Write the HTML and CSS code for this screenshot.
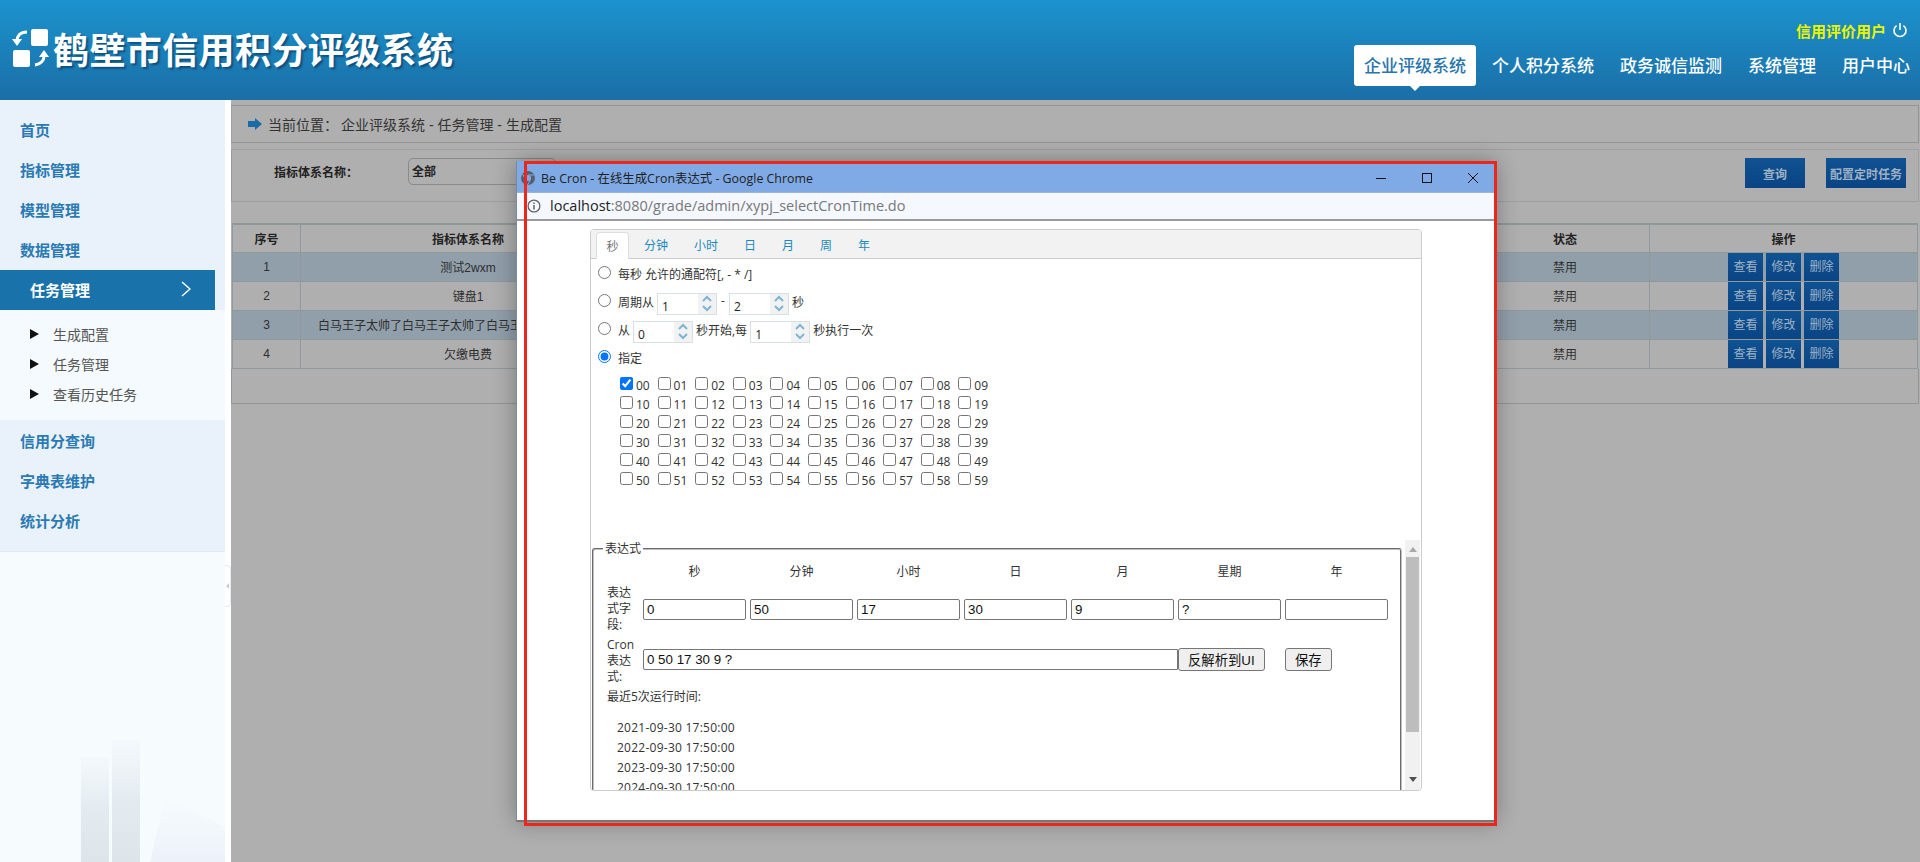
FILE: index.html
```html
<!DOCTYPE html>
<html lang="zh-CN">
<head>
    <meta charset="UTF-8">
    <title>鹤壁市信用积分评级系统</title>
    <link rel="stylesheet" href="styles.css">
</head>
<body>
<header class="top">
    <div class="brand">
        <svg class="logo" width="37" height="38" viewBox="0 0 37 38">
            <rect x="19" y="0" width="17" height="17" rx="2" fill="#fff"/>
            <rect x="1" y="21" width="17" height="17" rx="2" fill="#fff"/>
            <path d="M15 3 C8 3 5 7 5 12" fill="none" stroke="#fff" stroke-width="3"/>
            <path d="M0 10 L5 17 L10 10 Z" fill="#fff"/>
            <path d="M23 36 C29 35 32 31 32 27" fill="none" stroke="#fff" stroke-width="3"/>
            <path d="M27 28 L32 21 L37 28 Z" fill="#fff"/>
        </svg>
        <h1>鹤壁市信用积分评级系统</h1>
    </div>
    <div class="top-right">
        <div class="user">
            <span>信用评价用户</span>
            <svg width="16" height="16" viewBox="0 0 16 16">
                <path d="M4.6 3.6 A6 6 0 1 0 11.4 3.6" fill="none" stroke="#fff" stroke-width="1.6"/>
                <path d="M8 1 V8" stroke="#fff" stroke-width="1.6"/>
            </svg>
        </div>
        <nav class="nav">
            <a class="nav-item active">企业评级系统</a>
            <a class="nav-item">个人积分系统</a>
            <a class="nav-item">政务诚信监测</a>
            <a class="nav-item">系统管理</a>
            <a class="nav-item">用户中心</a>
        </nav>
    </div>
</header>

<div class="main">
    <aside class="side">
        <div class="menu-group first">
            <a class="menu-item">首页</a>
            <a class="menu-item">指标管理</a>
            <a class="menu-item">模型管理</a>
            <a class="menu-item">数据管理</a>
        </div>
        <a class="menu-active">
            <span>任务管理</span>
            <svg width="10" height="16" viewBox="0 0 10 16"><path d="M1 1 L9 8 L1 15" fill="none" stroke="#fff" stroke-width="1.5"/></svg>
        </a>
        <ul class="submenu">
            <li><i class="tri"></i>生成配置</li>
            <li><i class="tri"></i>任务管理</li>
            <li><i class="tri"></i>查看历史任务</li>
        </ul>
        <div class="menu-group second">
            <a class="menu-item">信用分查询</a>
            <a class="menu-item">字典表维护</a>
            <a class="menu-item">统计分析</a>
        </div>
        <svg class="skyline" width="225" height="125" viewBox="0 0 225 125">
            <defs>
                <linearGradient id="tower" x1="0" y1="0" x2="0" y2="1">
                    <stop offset="0" stop-color="#e6edf2" stop-opacity="0.2"/>
                    <stop offset="0.5" stop-color="#e4ebf0"/>
                    <stop offset="1" stop-color="#dde5ea"/>
                </linearGradient>
                <linearGradient id="haze" x1="0" y1="0" x2="0" y2="1">
                    <stop offset="0" stop-color="#eef3fa" stop-opacity="0"/>
                    <stop offset="1" stop-color="#edf2fa"/>
                </linearGradient>
            </defs>
            <path d="M165 60 L225 90 V125 H150 Z" fill="url(#haze)"/>
            <rect x="81" y="20" width="28" height="105" fill="url(#tower)"/>
            <rect x="112" y="3" width="28" height="122" fill="url(#tower)"/>
        </svg>
        <div class="side-handle"><i></i></div>
    </aside>

    <section class="content">
        <div class="crumb">
            <svg width="14" height="12" viewBox="0 0 14 12"><path d="M0 3 H7 V0 L14 6 L7 12 V9 H0 Z" fill="#1a6ca6"/></svg>
            <span class="crumb-label">当前位置：</span>
            <span>企业评级系统 - 任务管理 - 生成配置</span>
        </div>
        <div class="search">
            <label class="search-label">指标体系名称：</label>
            <select class="search-select"><option>全部</option></select>
            <button class="btn-query first-btn">查询</button>
            <button class="btn-query wide">配置定时任务</button>
        </div>
        <table class="grid">
            <colgroup>
                <col class="c-no"><col class="c-name"><col class="c-other"><col class="c-state"><col>
            </colgroup>
            <thead>
                <tr><th>序号</th><th>指标体系名称</th><th></th><th>状态</th><th>操作</th></tr>
            </thead>
            <tbody>
                <tr class="odd"><td>1</td><td>测试2wxm</td><td></td><td>禁用</td>
                    <td class="ops"><a>查看</a><a>修改</a><a>删除</a></td></tr>
                <tr><td>2</td><td>键盘1</td><td></td><td>禁用</td>
                    <td class="ops"><a>查看</a><a>修改</a><a>删除</a></td></tr>
                <tr class="odd"><td>3</td><td>白马王子太帅了白马王子太帅了白马王子太帅了白马王子</td><td></td><td>禁用</td>
                    <td class="ops"><a>查看</a><a>修改</a><a>删除</a></td></tr>
                <tr><td>4</td><td>欠缴电费</td><td></td><td>禁用</td>
                    <td class="ops"><a>查看</a><a>修改</a><a>删除</a></td></tr>
            </tbody>
        </table>
        <div class="grid-foot"></div>
    </section>
</div>

<!-- 弹出的 Chrome 窗口 -->
<div class="win">
    <div class="win-title">
        <svg width="14" height="14" viewBox="0 0 14 14">
            <circle cx="7" cy="7" r="7" fill="#55606e"/>
            <circle cx="7" cy="7" r="3" fill="#7faae6"/>
            <path d="M7 4 H13 M4.5 8.5 L1.5 3 M9.5 8.5 L6.5 14" stroke="#7faae6" stroke-width="1"/>
        </svg>
        <span class="win-name">Be Cron - 在线生成Cron表达式 - Google Chrome</span>
        <div class="win-btns">
            <span><svg width="12" height="12" viewBox="0 0 12 12"><path d="M1 6.5 H11" stroke="#111" stroke-width="1"/></svg></span>
            <span><svg width="12" height="12" viewBox="0 0 12 12"><rect x="1.5" y="1.5" width="9" height="9" fill="none" stroke="#111"/></svg></span>
            <span><svg width="12" height="12" viewBox="0 0 12 12"><path d="M1 1 L11 11 M11 1 L1 11" stroke="#111" stroke-width="1"/></svg></span>
        </div>
    </div>
    <div class="win-addr">
        <svg width="14" height="14" viewBox="0 0 14 14">
            <circle cx="7" cy="7" r="5.9" fill="none" stroke="#5f6368" stroke-width="1.3"/>
            <path d="M7 6 V10.5 M7 3.5 V5" stroke="#5f6368" stroke-width="1.5"/>
        </svg>
        <span class="addr-text"><b>localhost</b>:8080/grade/admin/xypj_selectCronTime.do</span>
    </div>
    <div class="win-body">
        <div class="panel">
            <div class="tabs">
                <a class="tab active">秒</a>
                <a class="tab">分钟</a>
                <a class="tab">小时</a>
                <a class="tab">日</a>
                <a class="tab">月</a>
                <a class="tab">周</a>
                <a class="tab">年</a>
            </div>
            <div class="pane">
                <div class="row"><input type="radio" name="sec"><span class="txt">每秒 允许的通配符[, - * /]</span></div>
                <div class="row">
                    <input type="radio" name="sec"><span class="txt">周期从</span>
                    <div class="spin"><input value="1"><div class="spin-arrows"><svg width="12" height="17" viewBox="0 0 12 17"><path d="M2 6 L6 2 L10 6 M2 11 L6 15 L10 11" fill="none" stroke="#7db5d4" stroke-width="2"/></svg></div></div>
                    <span class="txt dash">-</span>
                    <div class="spin"><input value="2"><div class="spin-arrows"><svg width="12" height="17" viewBox="0 0 12 17"><path d="M2 6 L6 2 L10 6 M2 11 L6 15 L10 11" fill="none" stroke="#7db5d4" stroke-width="2"/></svg></div></div>
                    <span class="txt">秒</span>
                </div>
                <div class="row">
                    <input type="radio" name="sec"><span class="txt">从</span>
                    <div class="spin"><input value="0"><div class="spin-arrows"><svg width="12" height="17" viewBox="0 0 12 17"><path d="M2 6 L6 2 L10 6 M2 11 L6 15 L10 11" fill="none" stroke="#7db5d4" stroke-width="2"/></svg></div></div>
                    <span class="txt">秒开始,每</span>
                    <div class="spin"><input value="1"><div class="spin-arrows"><svg width="12" height="17" viewBox="0 0 12 17"><path d="M2 6 L6 2 L10 6 M2 11 L6 15 L10 11" fill="none" stroke="#7db5d4" stroke-width="2"/></svg></div></div>
                    <span class="txt">秒执行一次</span>
                </div>
                <div class="row"><input type="radio" name="sec" checked><span class="txt">指定</span></div>
                <div class="checks">
                    <label><input type="checkbox" checked><span>00</span></label><label><input type="checkbox"><span>01</span></label><label><input type="checkbox"><span>02</span></label><label><input type="checkbox"><span>03</span></label><label><input type="checkbox"><span>04</span></label><label><input type="checkbox"><span>05</span></label><label><input type="checkbox"><span>06</span></label><label><input type="checkbox"><span>07</span></label><label><input type="checkbox"><span>08</span></label><label><input type="checkbox"><span>09</span></label>
                    <label><input type="checkbox"><span>10</span></label><label><input type="checkbox"><span>11</span></label><label><input type="checkbox"><span>12</span></label><label><input type="checkbox"><span>13</span></label><label><input type="checkbox"><span>14</span></label><label><input type="checkbox"><span>15</span></label><label><input type="checkbox"><span>16</span></label><label><input type="checkbox"><span>17</span></label><label><input type="checkbox"><span>18</span></label><label><input type="checkbox"><span>19</span></label>
                    <label><input type="checkbox"><span>20</span></label><label><input type="checkbox"><span>21</span></label><label><input type="checkbox"><span>22</span></label><label><input type="checkbox"><span>23</span></label><label><input type="checkbox"><span>24</span></label><label><input type="checkbox"><span>25</span></label><label><input type="checkbox"><span>26</span></label><label><input type="checkbox"><span>27</span></label><label><input type="checkbox"><span>28</span></label><label><input type="checkbox"><span>29</span></label>
                    <label><input type="checkbox"><span>30</span></label><label><input type="checkbox"><span>31</span></label><label><input type="checkbox"><span>32</span></label><label><input type="checkbox"><span>33</span></label><label><input type="checkbox"><span>34</span></label><label><input type="checkbox"><span>35</span></label><label><input type="checkbox"><span>36</span></label><label><input type="checkbox"><span>37</span></label><label><input type="checkbox"><span>38</span></label><label><input type="checkbox"><span>39</span></label>
                    <label><input type="checkbox"><span>40</span></label><label><input type="checkbox"><span>41</span></label><label><input type="checkbox"><span>42</span></label><label><input type="checkbox"><span>43</span></label><label><input type="checkbox"><span>44</span></label><label><input type="checkbox"><span>45</span></label><label><input type="checkbox"><span>46</span></label><label><input type="checkbox"><span>47</span></label><label><input type="checkbox"><span>48</span></label><label><input type="checkbox"><span>49</span></label>
                    <label><input type="checkbox"><span>50</span></label><label><input type="checkbox"><span>51</span></label><label><input type="checkbox"><span>52</span></label><label><input type="checkbox"><span>53</span></label><label><input type="checkbox"><span>54</span></label><label><input type="checkbox"><span>55</span></label><label><input type="checkbox"><span>56</span></label><label><input type="checkbox"><span>57</span></label><label><input type="checkbox"><span>58</span></label><label><input type="checkbox"><span>59</span></label>
                </div>
            </div>
            <div class="expr">
                <div class="expr-view">
                    <fieldset class="expr-box">
                        <legend>表达式</legend>
                        <div class="expr-grid">
                            <span></span>
                            <span class="col-head">秒</span><span class="col-head">分钟</span><span class="col-head">小时</span><span class="col-head">日</span><span class="col-head">月</span><span class="col-head">星期</span><span class="col-head">年</span>
                            <span class="row-label">表达式字段:</span>
                            <input class="field" value="0"><input class="field" value="50"><input class="field" value="17"><input class="field" value="30"><input class="field" value="9"><input class="field" value="?"><input class="field" value="">
                            <span class="row-label end">Cron 表达式:</span>
                            <input class="field cron" value="0 50 17 30 9 ?">
                            <div><button class="plain">反解析到UI</button></div>
                            <div><button class="plain">保存</button></div>
                        </div>
                        <div class="recent">最近5次运行时间:</div>
                        <ul class="times">
                            <li>2021-09-30 17:50:00</li>
                            <li>2022-09-30 17:50:00</li>
                            <li>2023-09-30 17:50:00</li>
                            <li>2024-09-30 17:50:00</li>
                            <li>2025-09-30 17:50:00</li>
                        </ul>
                    </fieldset>
                </div>
                <div class="scrollbar">
                    <svg width="8" height="5" viewBox="0 0 8 5"><path d="M0 5 L4 0 L8 5 Z" fill="#a8a8a8"/></svg>
                    <div class="thumb"></div>
                    <svg class="down" width="8" height="5" viewBox="0 0 8 5"><path d="M0 0 L4 5 L8 0 Z" fill="#505050"/></svg>
                </div>
            </div>
        </div>
    </div>
</div>
<div class="mark"></div>
</body>
</html>
```
FILE: styles.css
```css
* {
    box-sizing: border-box;
}

html, body {
    height: 100%;
}

body {
    margin: 0;
    overflow: hidden;
    font-family: "Liberation Sans", "Noto Sans CJK SC", sans-serif;
    font-size: 12px;
    color: #2e2e2e;
    background: #afafaf;
}

ul {
    margin: 0;
    padding: 0;
    list-style: none;
}

/* 顶部 */
.top {
    height: 100px;
    display: flex;
    justify-content: space-between;
    background: linear-gradient(#1b93ce, #1b6ea6);
}

.brand {
    display: flex;
    align-items: center;
    padding: 0 0 4px 12px;
    gap: 4px;
}

.logo {
    flex: none;
}

.brand h1 {
    margin: 0;
    font-family: "Noto Sans CJK SC", sans-serif;
    font-size: 36px;
    font-weight: 700;
    letter-spacing: 0.4px;
    color: #fff;
    text-shadow: 2px 2px 2px rgba(0, 40, 80, 0.55);
}

.top-right {
    display: flex;
    flex-direction: column;
    align-items: flex-end;
    padding-top: 19px;
}

.user {
    display: flex;
    align-items: center;
    gap: 6px;
    height: 22px;
    padding-right: 12px;
    font-family: "Noto Sans CJK SC", sans-serif;
    font-size: 15px;
    font-weight: 700;
    color: #e9f500;
}

.nav {
    display: flex;
    gap: 6px;
    margin-top: 4px;
}

.nav-item {
    position: relative;
    height: 41px;
    padding: 0 10px;
    font-family: "Noto Sans CJK SC", sans-serif;
    font-size: 17px;
    font-weight: 500;
    line-height: 40px;
    color: #fff;
}

.nav-item.active {
    background: #fff;
    border-radius: 3px;
    color: #2a76ab;
}

.nav-item.active::after {
    content: "";
    position: absolute;
    left: 50%;
    bottom: -5px;
    margin-left: -5px;
    border-left: 5px solid transparent;
    border-right: 5px solid transparent;
    border-top: 5px solid #fff;
}

/* 主体 */
.main {
    display: flex;
    height: 762px;
}

.side {
    position: relative;
    flex: none;
    width: 231px;
    border-right: 6px solid #fff;
    background: #f6fbfe;
    font-family: "Noto Sans CJK SC", sans-serif;
}

.menu-group {
    background: #e9f1fb;
    border-bottom: 1px solid #e2ebf5;
}

.menu-group.first {
    height: 170px;
    padding-top: 10px;
    border-bottom: 0;
}

.menu-group.second {
    height: 132px;
    padding-top: 1px;
}

.menu-item {
    display: block;
    height: 40px;
    padding-left: 20px;
    font-size: 15px;
    font-weight: 700;
    line-height: 40px;
    color: #2b7ab3;
}

.menu-active {
    display: flex;
    align-items: center;
    justify-content: space-between;
    position: relative;
    width: 215px;
    height: 40px;
    padding: 0 24px 2px 30px;
    background: #1a72ab;
    font-size: 15px;
    font-weight: 700;
    color: #fff;
}

.menu-group.first + .menu-active {
    box-shadow: 10px 0 0 #e9f1fb;
}

.submenu {
    height: 110px;
    padding-top: 9px;
    background: #f5fafe;
}

.submenu li {
    display: flex;
    align-items: center;
    height: 30px;
    padding-left: 30px;
    font-size: 14px;
    color: #555;
}

.tri {
    width: 0;
    height: 0;
    margin-right: 14px;
    border-left: 9px solid #111;
    border-top: 5px solid transparent;
    border-bottom: 5px solid transparent;
}

.skyline {
    position: absolute;
    left: 0;
    bottom: 0;
}

.side-handle {
    position: absolute;
    left: 225px;
    top: 465px;
    display: flex;
    align-items: center;
    justify-content: center;
    width: 6px;
    height: 42px;
    background: #fff;
    border: 1px solid #e6ebef;
    border-left: 0;
    border-radius: 0 4px 4px 0;
}

.side-handle i {
    border-right: 3px solid #c5ccd3;
    border-top: 3px solid transparent;
    border-bottom: 3px solid transparent;
}

/* 右侧内容 */
.content {
    flex: 1;
    min-width: 0;
    padding: 5px 1px 0 0;
}

.crumb {
    display: flex;
    align-items: center;
    height: 38px;
    padding: 0 0 0 16px;
    border: 1px solid #959595;
    border-left-color: #a0a0a0;
    font-size: 14px;
    color: #333;
}

.crumb svg {
    margin-right: 6px;
}

.crumb-label {
    width: 74px;
}

.crumb span:last-child {
    margin-left: -1px;
}

.search {
    display: flex;
    align-items: flex-start;
    height: 53px;
    margin-top: 6px;
    padding: 8px 12px 0 42px;
    border: 1px solid #a0a0a0;
    border-left-color: #999;
}

.search-label {
    width: 134px;
    padding-top: 5px;
    font-weight: 700;
    color: #222;
}

.search-select {
    width: 148px;
    height: 27px;
    padding: 0 3px;
    font: 700 12px "Liberation Sans", "Noto Sans CJK SC", sans-serif;
    color: #222;
    background: #afafaf;
    border: 1px solid #8a8a8a;
    border-radius: 5px;
    appearance: none;
}

.btn-query {
    width: 60px;
    height: 30px;
    padding: 0;
    border: 0;
    font: 700 12px "Liberation Sans", "Noto Sans CJK SC", sans-serif;
    color: #9fb1c4;
    background: linear-gradient(#0f5292, #0a4484);
}

.first-btn {
    margin-left: auto;
}

.btn-query.wide {
    width: 80px;
    margin-left: 21px;
}

.grid {
    width: 1686px;
    margin: 21px 0 0 1px;
    table-layout: fixed;
    border-collapse: collapse;
    border-top: 2px solid #8b9a98;
}

.c-no {
    width: 68px;
}

.c-name {
    width: 335px;
}

.c-other {
    width: 845px;
}

.c-state {
    width: 169px;
}

.grid th,
.grid td {
    height: 29px;
    padding: 0;
    border: 1px solid #8f9a9c;
    text-align: center;
    white-space: nowrap;
    overflow: hidden;
    color: #2e2e2e;
}

.grid th {
    height: 28px;
    font-weight: 700;
    color: #222;
}

.grid .odd td {
    background: #919fab;
}

.ops {
    font-size: 0;
}

.ops a {
    display: inline-block;
    width: 35px;
    height: 28px;
    margin: 0 1.5px;
    font-size: 12px;
    line-height: 28px;
    color: #9fb1c4;
    background: linear-gradient(#0f5292, #0a4484);
    vertical-align: top;
}

.grid-foot {
    height: 35px;
    border: 1px solid #959595;
    border-top: 0;
}

/* Chrome 窗口 */
.win {
    position: absolute;
    left: 516px;
    top: 161px;
    width: 980px;
    height: 661px;
    display: flex;
    flex-direction: column;
    background: #fff;
    border-left: 1px solid #7c8aa0;
    border-bottom: 2px solid #777;
    box-shadow: 0 0 22px rgba(0, 0, 0, 0.32);
}

.win-title {
    flex: none;
    display: flex;
    align-items: center;
    height: 31px;
    padding: 2px 0 0 4px;
    background: #7faae6;
    font-family: "Open Sans", "Noto Sans CJK SC", sans-serif;
    font-size: 12.4px;
    color: #222;
}

.win-name {
    margin-left: 6px;
}

.win-btns {
    display: flex;
    margin-left: auto;
}

.win-btns span {
    display: flex;
    justify-content: center;
    width: 46px;
}

.win-addr {
    flex: none;
    display: flex;
    align-items: center;
    height: 29px;
    padding: 0 0 1px 10px;
    background: #f5f9ff;
    border-top: 1px solid #9fb4d4;
    border-bottom: 2px solid #999;
}

.addr-text {
    margin-left: 9px;
    font-family: "Open Sans", sans-serif;
    font-size: 14.5px;
    color: #777;
}

.addr-text b {
    font-weight: 400;
    color: #222;
}

.win-body {
    flex: 1;
    min-height: 0;
    padding: 8px 0 0 73px;
}

.panel {
    width: 832px;
    height: 562px;
    border: 1px solid #ccc;
    border-radius: 4px;
    font-family: "Open Sans", "Noto Sans CJK SC", sans-serif;
    color: #333;
    overflow: hidden;
}

.tabs {
    display: flex;
    height: 29px;
    padding: 2px 0 0 5px;
    background: #f2f2f2;
    border-bottom: 1px solid #ccc;
}

.tab {
    height: 26px;
    padding: 0 13px;
    line-height: 27px;
    color: #1b8ac0;
}

.tab.active {
    width: 33px;
    height: 27px;
    margin-right: 2px;
    padding: 0;
    text-align: center;
    color: #777;
    background: #fff;
    border: 1px solid #ddd;
    border-bottom: 0;
    border-radius: 4px 4px 0 0;
}

.pane {
    height: 282px;
    margin-top: -1px;
    padding-left: 7px;
}

.row {
    display: flex;
    align-items: center;
    height: 28px;
}

.row input[type="radio"] {
    width: 13px;
    height: 13px;
    margin: 0 7px 0 0;
}

.txt {
    margin-top: 4px;
    white-space: nowrap;
}

.dash {
    width: 6px;
    margin-top: 0;
    text-align: center;
}

.spin {
    display: flex;
    flex: none;
    width: 60px;
    height: 22px;
    margin: 7px 3px 0;
    border: 1px solid #d9e0e4;
}

.spin input {
    width: 40px;
    height: 100%;
    padding: 5px 0 0 4px;
    border: 0;
    outline: 0;
    font: 12px "Open Sans", sans-serif;
    color: #222;
    background: #fff;
}

.spin-arrows {
    display: flex;
    align-items: center;
    justify-content: center;
    flex: 1;
    background: #f2f2f2;
}

.checks {
    display: grid;
    grid-template-columns: repeat(10, 37.6px);
    grid-auto-rows: 19px;
    margin: 4px 0 0 22px;
}

.checks label {
    display: flex;
    align-items: center;
}

.checks input {
    flex: none;
    width: 13px;
    height: 13px;
    margin: 0 3px 0 0;
}

.checks span {
    margin-top: 3px;
}

.expr {
    display: flex;
    height: 250px;
}

.expr-view {
    width: 814px;
    overflow: hidden;
}

.expr-box {
    width: 810px;
    margin: 0 0 0 1px;
    padding: 0 0 0 13px;
    border: 2px groove #c0c0c0;
    border-radius: 3px;
    min-inline-size: 0;
}

.expr-box legend {
    margin-left: -4px;
    padding: 0 2px;
    line-height: 17px;
}

.expr-grid {
    display: grid;
    grid-template-columns: 36px repeat(7, 107px);
    grid-template-rows: 28px 48px 52px;
    align-items: center;
}

.col-head {
    width: 103px;
    text-align: center;
}

.row-label {
    padding-right: 8px;
    line-height: 16px;
}

.row-label.end {
    align-self: end;
}

.field {
    width: 103px;
    height: 21px;
    padding: 1px 3px;
    border: 1px solid #767676;
    border-radius: 2px;
    font: 13.33px "Liberation Sans", sans-serif;
    color: #111;
}

.field.cron {
    grid-column: span 5;
    width: 100%;
    border-radius: 2px 0 0 2px;
}

.plain {
    display: block;
    height: 23px;
    padding: 0 9px;
    font: 13.33px "Liberation Sans", "Noto Sans CJK SC", sans-serif;
    color: #111;
    background: #efefef;
    border: 1px solid #767676;
    border-radius: 3px;
}

.recent {
    margin-top: 4px;
    line-height: 16px;
}

.times {
    margin-top: 13px;
    padding-left: 10px;
}

.times li {
    height: 20px;
    line-height: 20px;
    letter-spacing: 0.25px;
}

.scrollbar {
    display: flex;
    flex-direction: column;
    align-items: center;
    width: 15px;
    padding-top: 7px;
    background: #f1f1f1;
}

.thumb {
    width: 13px;
    height: 175px;
    margin-top: 5px;
    background: #bdbdbd;
}

.scrollbar .down {
    margin-top: auto;
    margin-bottom: 8px;
}

/* 红框标注 */
.mark {
    position: absolute;
    left: 524px;
    top: 161px;
    width: 973px;
    height: 665px;
    border: 3px solid #ea261d;
    pointer-events: none;
}
```
